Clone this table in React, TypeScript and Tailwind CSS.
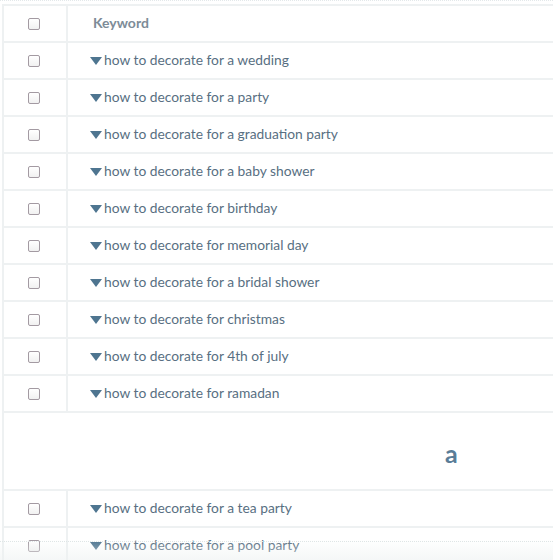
import React from "react"

const rowsTop = [
  "how to decorate for a wedding",
  "how to decorate for a party",
  "how to decorate for a graduation party",
  "how to decorate for a baby shower",
  "how to decorate for birthday",
  "how to decorate for memorial day",
  "how to decorate for a bridal shower",
  "how to decorate for christmas",
  "how to decorate for 4th of july",
  "how to decorate for ramadan",
]

const rowsBottom = ["how to decorate for a tea party", "how to decorate for a pool party"]

function Box() {
  return (
    <span className="block h-[12px] w-[12px] rounded-[2px] border border-[#a39aa2] bg-gradient-to-b from-white to-[#f1f1f1]" />
  )
}

function Row({ text }: { text: string }) {
  return (
    <div className="flex h-[37px] border-b-2 border-[#eef1f2]">
      <div className="flex w-[64px] items-center justify-center border-r-2 border-[#eef1f2] pr-[2px]">
        <Box />
      </div>
      <div className="flex flex-1 items-center pb-[1px] pl-[22px] text-[13.8px] text-[#586f82]">
        <svg width="12" height="8" viewBox="0 0 12 8" className="mr-[2px] mt-[1px]">
          <path d="M0 0 H12 L6 8 Z" fill="#4e7590" />
        </svg>
        <span>{text}</span>
      </div>
    </div>
  )
}

export default function App() {
  return (
    <div
      className="relative h-[560px] w-[553px] overflow-hidden bg-white"
      style={{ fontFamily: "Lato, 'Open Sans', sans-serif" }}
    >
      <div className="h-[1px] border-t border-dotted border-[#e3e8ea]" />
      <div className="ml-[2px] mt-[3px] border-l-2 border-t-2 border-[#eef1f2]">
        <div className="flex h-[37px] border-b-2 border-[#eef1f2]">
          <div className="flex w-[64px] items-center justify-center border-r-2 border-[#eef1f2] pr-[2px]">
            <Box />
          </div>
          <div className="flex flex-1 items-center pb-[3px] pl-[25px] text-[14px] font-bold text-[#7d8c98]">
            Keyword
          </div>
        </div>
        {rowsTop.map((t) => (
          <Row key={t} text={t} />
        ))}
        <div className="flex h-[78px] items-center border-b-2 border-[#eef1f2] pl-[441px] pt-[6px] text-[25px] font-bold text-[#5a7d98]">
          a
        </div>
        {rowsBottom.map((t) => (
          <Row key={t} text={t} />
        ))}
      </div>
      <div className="pointer-events-none absolute bottom-0 left-0 right-0 h-[20px] bg-gradient-to-b from-transparent to-[#eef2f1]/60">
        <div className="mt-[1px] border-t border-dotted border-[#dfe6e6]" />
      </div>
    </div>
  )
}
